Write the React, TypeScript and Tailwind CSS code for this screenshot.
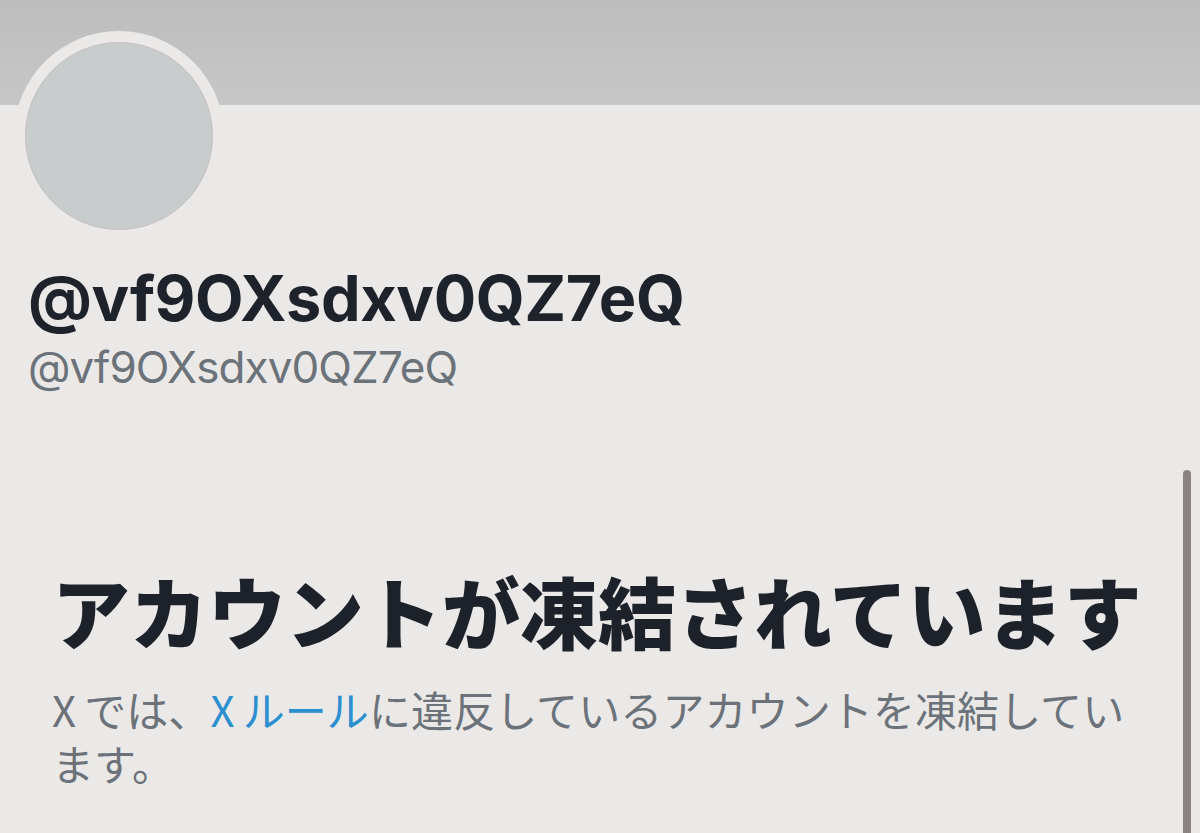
export default function App() {
  return (
    <div className="relative w-[1200px] h-[833px] overflow-hidden bg-[#ebe9e7]">
      <div className="h-[105px] bg-gradient-to-b from-[#bdbdbd] to-[#c7c7c7]" />

      <div className="ml-[14px] -mt-[74px] w-[210px] h-[210px] rounded-full bg-[#ebe9e7] p-[11px]">
        <div className="w-full h-full rounded-full bg-[#c9cccd] border border-[#c4c0bf]" />
      </div>

      <div className="pl-[28px] pt-[19px] font-['Inter','Liberation_Sans',sans-serif]">
        <h1 className="text-[63px] leading-[76px] font-bold text-[#1e222a] tracking-[-0.4px]">
          @vf9OXsdxv0QZ7eQ
        </h1>
        <p className="mt-[3px] text-[44px] leading-[56px] text-[#6c7279] tracking-[-0.9px]">@vf9OXsdxv0QZ7eQ</p>
      </div>

      <div className="pl-[52px] pt-[167px] w-[1150px] font-['Noto_Sans_CJK_JP','Noto_Sans',sans-serif]">
        <h2 className="whitespace-nowrap text-[78px] leading-[96px] font-black text-[#1d2129]">
          アカウントが凍結されています
        </h2>
        <p className="mt-[24px] w-[1085px] text-[42px] leading-[54px] tracking-[0.1px] text-[#6c7279]">
          <span className="mr-[8px]">X</span>では、
          <span className="text-[#2b8fd0]">
            <span className="mr-[8px]">X</span>ルール
          </span>
          に違反しているアカウントを凍結しています。
        </p>
      </div>

      <div className="absolute left-[1183px] top-[470px] w-[8px] h-[400px] rounded-full bg-[#8b8381]" />
    </div>
  );
}
